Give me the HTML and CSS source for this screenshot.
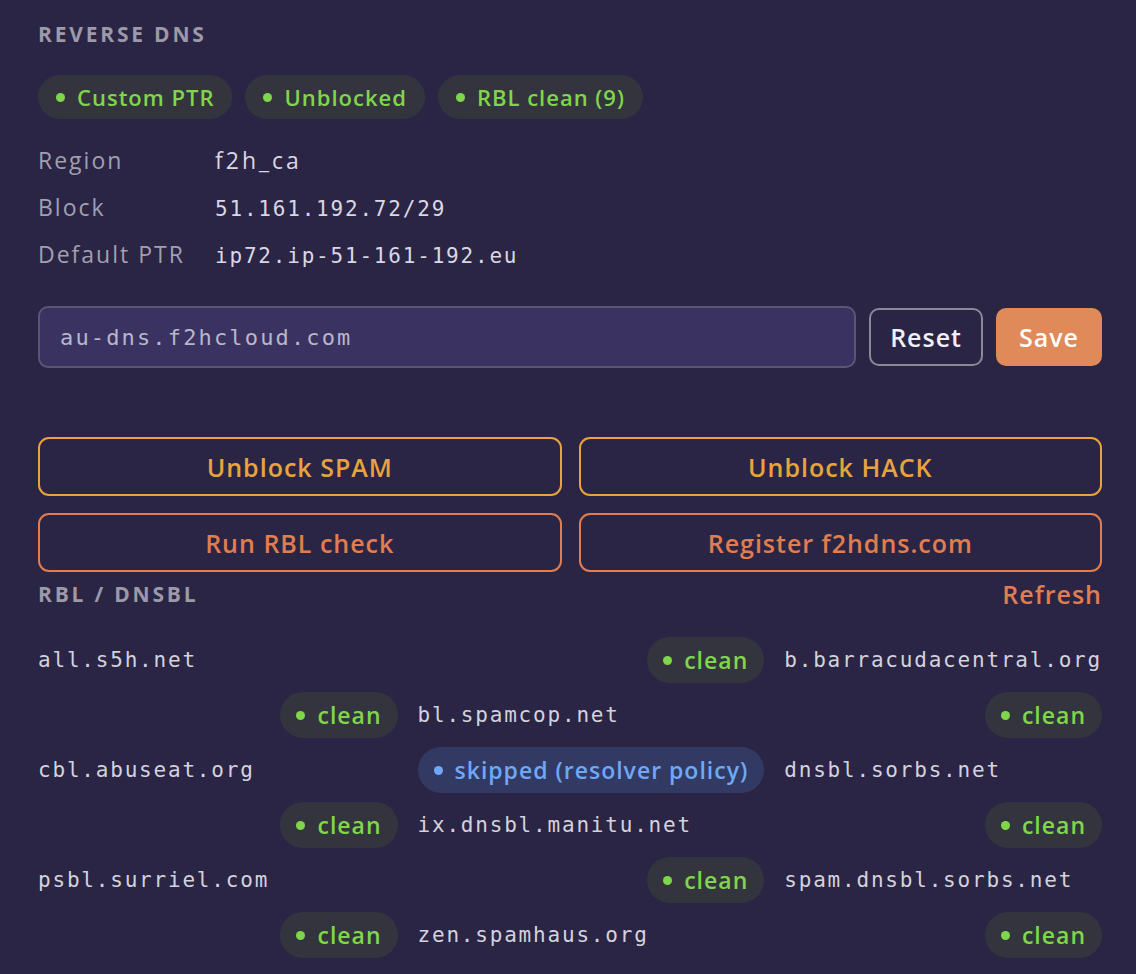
FILE: index.html
```html
<!DOCTYPE html>
<html lang="en">
<head>
<meta charset="utf-8">
<title>Reverse DNS</title>
<link rel="stylesheet" href="styles.css">
</head>
<body>
<section class="panel">
  <h3 class="section-title">Reverse DNS</h3>

  <div class="badges">
    <span class="pill pill-ok badge"><span class="dot"></span>Custom PTR</span>
    <span class="pill pill-ok badge"><span class="dot"></span>Unblocked</span>
    <span class="pill pill-ok badge"><span class="dot"></span>RBL clean (9)</span>
  </div>

  <dl class="info">
    <dt>Region</dt><dd>f2h_ca</dd>
    <dt>Block</dt><dd><code class="mono">51.161.192.72/29</code></dd>
    <dt>Default PTR</dt><dd><code class="mono">ip72.ip-51-161-192.eu</code></dd>
  </dl>

  <form class="ptr-form">
    <input class="ptr-input" type="text" value="au-dns.f2hcloud.com">
    <button type="button" class="btn btn-ghost">Reset</button>
    <button type="button" class="btn btn-primary">Save</button>
  </form>

  <div class="actions">
    <button type="button" class="btn-outline btn-amber">Unblock SPAM</button>
    <button type="button" class="btn-outline btn-amber">Unblock HACK</button>
    <button type="button" class="btn-outline btn-orange">Run RBL check</button>
    <button type="button" class="btn-outline btn-orange">Register f2hdns.com</button>
  </div>

  <div class="rbl-head">
    <h3 class="section-title">RBL / DNSBL</h3>
    <a class="link" href="#">Refresh</a>
  </div>

  <div class="rbl-grid">
    <span class="host">all.s5h.net</span>
    <span class="pill pill-ok status"><span class="dot"></span>clean</span>
    <span class="host">b.barracudacentral.org</span>
    <span class="pill pill-ok status"><span class="dot"></span>clean</span>
    <span class="host">bl.spamcop.net</span>
    <span class="pill pill-ok status"><span class="dot"></span>clean</span>
    <span class="host">cbl.abuseat.org</span>
    <span class="pill pill-info status"><span class="dot"></span>skipped (resolver policy)</span>
    <span class="host">dnsbl.sorbs.net</span>
    <span class="pill pill-ok status"><span class="dot"></span>clean</span>
    <span class="host">ix.dnsbl.manitu.net</span>
    <span class="pill pill-ok status"><span class="dot"></span>clean</span>
    <span class="host">psbl.surriel.com</span>
    <span class="pill pill-ok status"><span class="dot"></span>clean</span>
    <span class="host">spam.dnsbl.sorbs.net</span>
    <span class="pill pill-ok status"><span class="dot"></span>clean</span>
    <span class="host">zen.spamhaus.org</span>
    <span class="pill pill-ok status"><span class="dot"></span>clean</span>
  </div>
</section>
</body>
</html>
```

FILE: styles.css
```css
* { box-sizing: border-box; }

html, body {
  margin: 0;
  background: #2a2545;
}

body {
  font-family: "Open Sans", "Noto Sans", sans-serif;
  color: #e6e4ee;
  height: 974px;
  overflow: hidden;
}

.panel {
  padding: 21px 34px 0 38px;
}

.section-title {
  margin: 0;
  font-size: 21px;
  font-weight: 700;
  letter-spacing: 2.8px;
  text-transform: uppercase;
  color: #9c99a9;
  line-height: 26px;
}

.badges {
  display: flex;
  gap: 13px;
  margin-top: 28px;
}

.pill {
  display: inline-flex;
  align-items: center;
  gap: 12px;
  height: 44px;
  padding: 0 16px;
  border-radius: 23px;
  font-size: 22px;
  font-weight: 600;
  letter-spacing: 1px;
  white-space: nowrap;
}

.badge {
  padding: 0 18px 0 18px;
}

.pill .dot {
  width: 9px;
  height: 9px;
  border-radius: 50%;
  background: currentColor;
  flex: none;
}

.pill-ok {
  background: #34343f;
  color: #7fd64b;
}

.pill-info {
  background: #323a63;
  color: #6ea8f7;
}

.info {
  display: grid;
  grid-template-columns: 177px 1fr;
  grid-auto-rows: 47px;
  align-items: center;
  margin: 17px 0 0;
}

.info dt {
  font-size: 23px;
  letter-spacing: 2px;
  color: #a29fb0;
}

.info dd {
  margin: 0;
  font-size: 23px;
  letter-spacing: 3px;
  color: #d9d7e2;
}

.mono {
  font-family: "DejaVu Sans Mono", "Liberation Mono", monospace;
  font-size: 21px;
  letter-spacing: 1.8px;
  color: #d9d7e2;
}

.ptr-form {
  display: flex;
  align-items: center;
  gap: 13px;
  margin-top: 29px;
}

.ptr-input {
  flex: 1;
  min-width: 0;
  height: 62px;
  padding: 0 20px;
  background: #3a3362;
  border: 2px solid #5b5672;
  border-radius: 10px;
  color: #b9b6c9;
  font-family: "DejaVu Sans Mono", "Liberation Mono", monospace;
  font-size: 22px;
  letter-spacing: 2.15px;
  outline: none;
}

.btn {
  height: 58px;
  padding: 0 19px;
  border-radius: 10px;
  font-family: inherit;
  font-size: 25px;
  font-weight: 600;
  letter-spacing: 1px;
  cursor: pointer;
}

.btn-ghost {
  background: transparent;
  border: 2px solid #8b8899;
  color: #f2f0f7;
}

.btn-primary {
  padding: 0 21px;
  background: #e08a5a;
  border: 2px solid #e08a5a;
  color: #ffffff;
}

.actions {
  display: grid;
  grid-template-columns: 1fr 1fr;
  gap: 17px;
  margin-top: 69px;
}

.btn-outline {
  height: 59px;
  background: transparent;
  border: 2px solid currentColor;
  border-radius: 11px;
  font-family: inherit;
  font-size: 25px;
  font-weight: 600;
  letter-spacing: 1px;
  cursor: pointer;
}

.btn-amber { color: #e9a33c; }
.btn-orange { color: #e17d4e; }

.rbl-head {
  display: flex;
  justify-content: space-between;
  align-items: center;
  margin-top: 8px;
  height: 28px;
}

.link {
  color: #e17d4e;
  font-size: 25px;
  font-weight: 600;
  letter-spacing: 1px;
  text-decoration: none;
}

.rbl-grid {
  display: grid;
  grid-template-columns: 1fr auto auto;
  column-gap: 20px;
  row-gap: 9px;
  grid-auto-rows: 46px;
  align-items: center;
  margin-top: 29px;
}

.rbl-grid .status {
  justify-self: end;
  height: 46px;
  font-size: 23px;
}

.host {
  font-family: "DejaVu Sans Mono", "Liberation Mono", monospace;
  font-size: 21px;
  letter-spacing: 1.8px;
  color: #d4d2dc;
  white-space: nowrap;
}
```
